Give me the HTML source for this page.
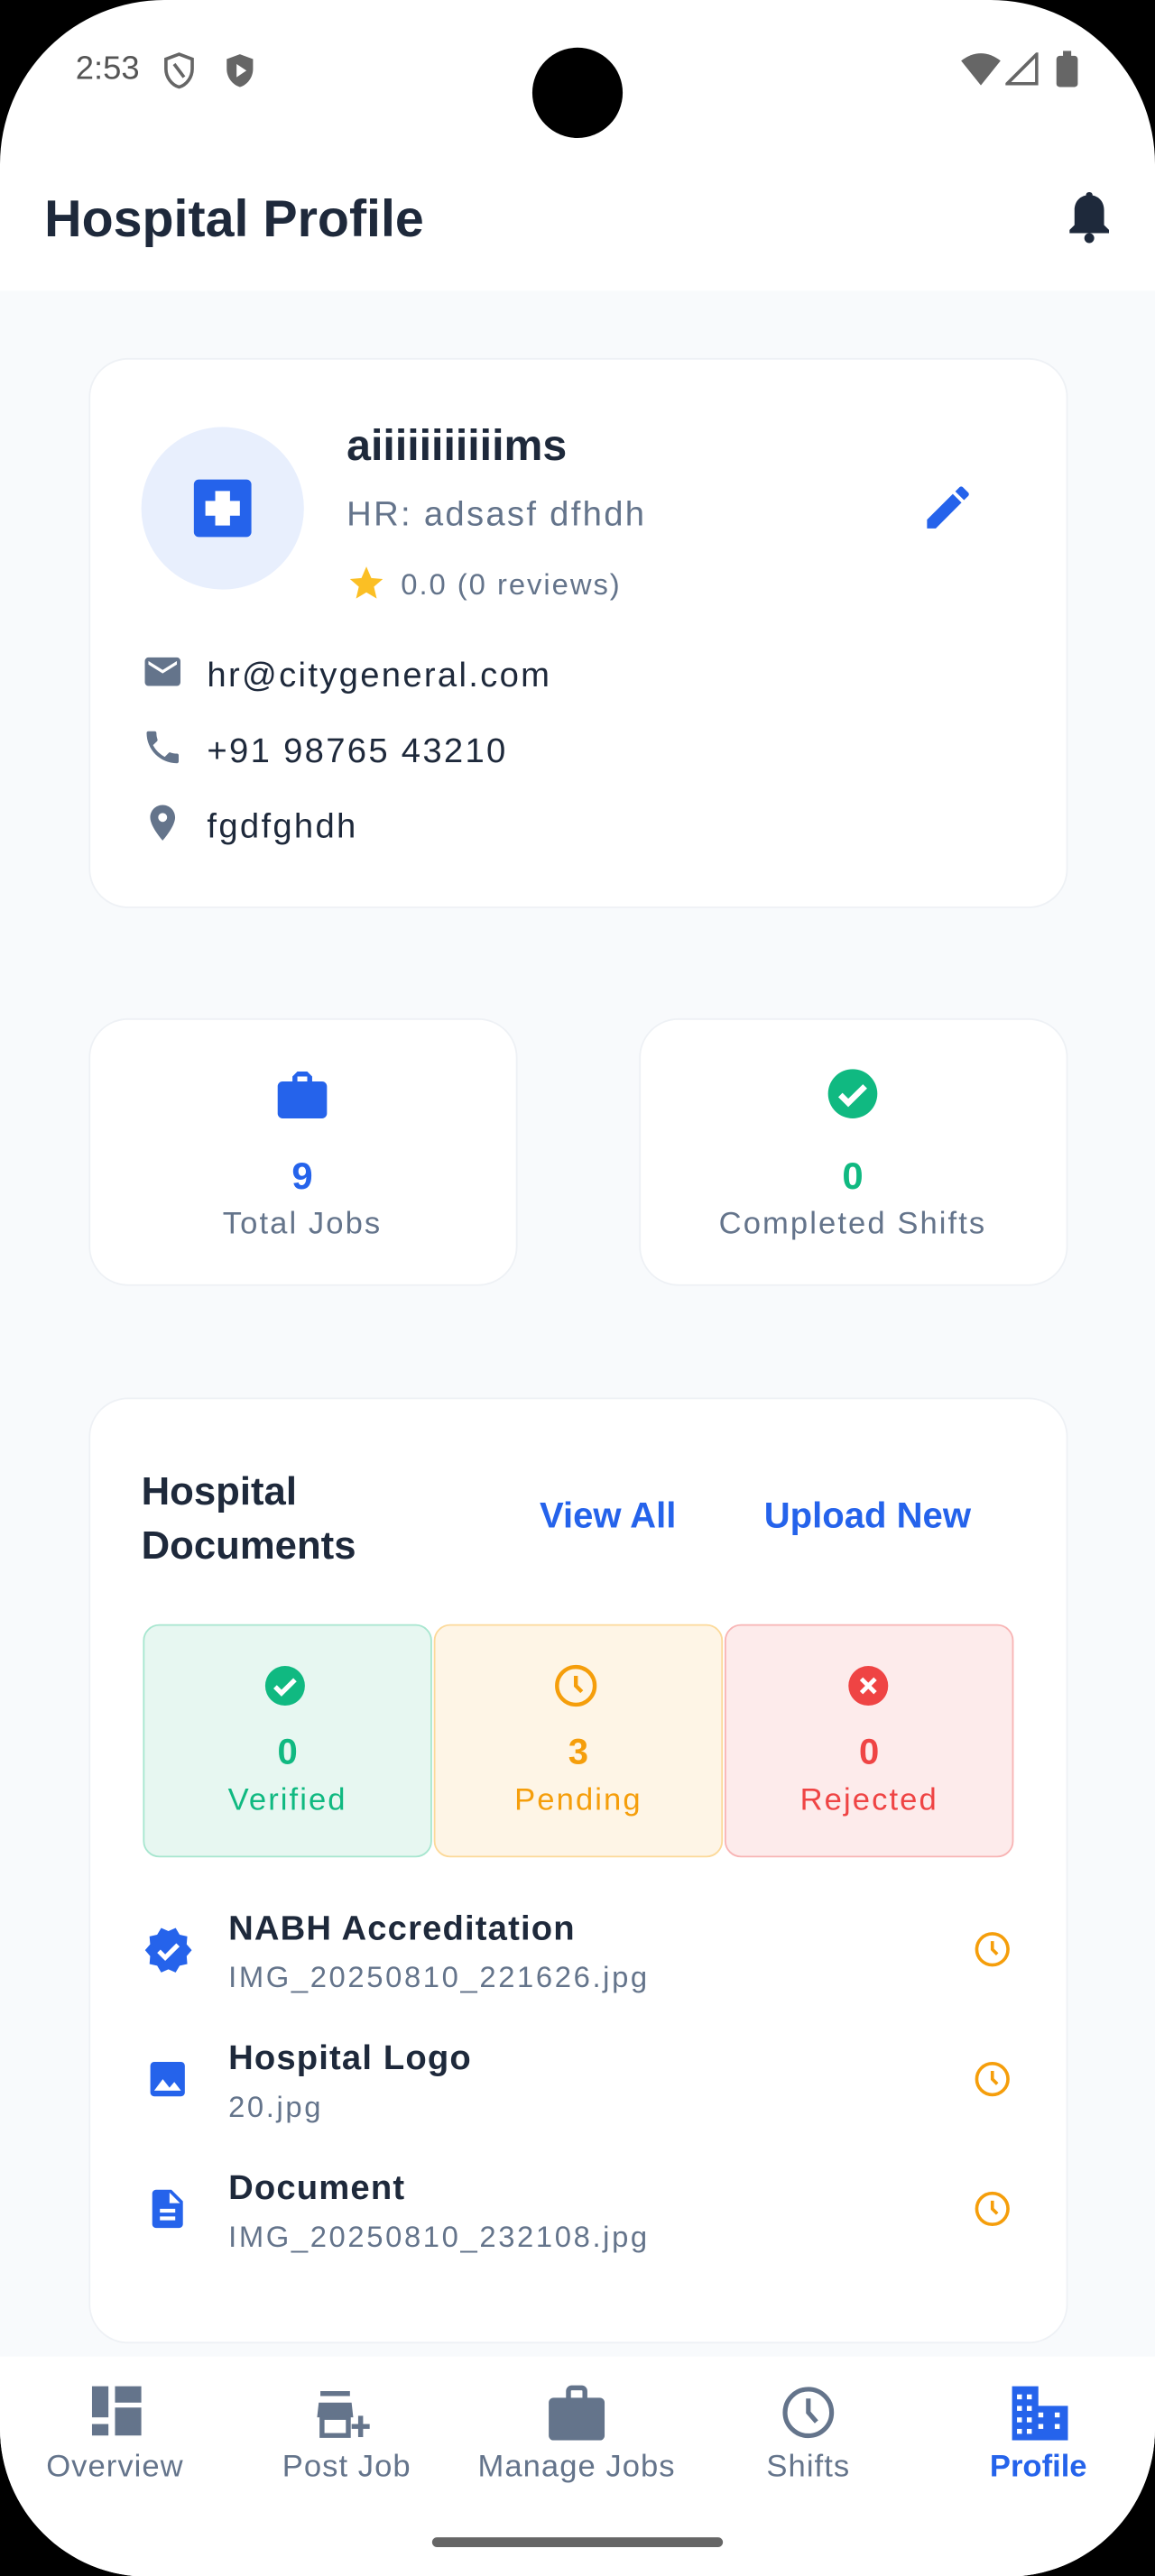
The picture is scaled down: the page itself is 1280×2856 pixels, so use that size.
<!DOCTYPE html>
<html><head><meta charset="utf-8"><style>
*{margin:0;padding:0;box-sizing:border-box}
html,body{width:1280px;height:2856px;overflow:hidden;background:#000}
#w{position:absolute;left:0;top:0;width:703px;height:1568.5px;transform:scale(1.82077);transform-origin:0 0;font-family:"Liberation Sans",Roboto,sans-serif}
#ph{position:absolute;inset:0;background:#fff;border-radius:100px 100px 90px 90px;overflow:hidden}
.a{position:absolute;white-space:nowrap}
.r{letter-spacing:0.06em}
.card{position:absolute;background:#fff;border:1px solid #eef1f5;border-radius:24px}
.c{transform:translateX(-50%);text-align:center}
svg{position:absolute}
</style></head><body><div id="w"><div id="ph">
<!-- status bar -->
<div class="a" style="left:46px;top:31px;font-size:20px;color:#555">2:53</div>
<svg style="left:97px;top:31px" width="24" height="24" viewBox="0 0 24 24"><path d="M12 2 4 5v6c0 5 3.4 9.7 8 11 4.6-1.3 8-6 8-11V5z" fill="none" stroke="#666" stroke-width="2"/><path d="M9 8l6 8" stroke="#666" stroke-width="2"/></svg>
<svg style="left:134px;top:31px" width="24" height="24" viewBox="0 0 24 24"><path d="M12 2 4 5v6c0 5 3.4 9.7 8 11 4.6-1.3 8-6 8-11V5z" fill="#666"/><path d="M10 8v8l6-4z" fill="#fff"/></svg>
<div class="a" style="left:324px;top:29px;width:55px;height:55px;border-radius:50%;background:#000"></div>
<svg style="left:584px;top:31px" width="26" height="22" viewBox="0 0 26 22"><path d="M1 6Q13-3 25 6L13 21z" fill="#666"/></svg>
<svg style="left:612px;top:32px" width="20" height="20" viewBox="0 0 20 20"><path d="M19 1V19H1z" fill="none" stroke="#666" stroke-width="2"/></svg>
<div class="a" style="left:643px;top:34px;width:13px;height:19px;background:#666;border-radius:2px"></div>
<div class="a" style="left:647px;top:31px;width:5px;height:4px;background:#666"></div>
<!-- app bar -->
<div class="a" style="left:27px;top:115px;font-size:31.5px;font-weight:bold;color:#1e293b">Hospital Profile</div>
<svg style="left:648px;top:115px" width="30" height="34" viewBox="0 0 30 34"><path d="M15 2c-1.5 0-2 1-2 2-5 1-7 5-7 9v9l-3 3v2h24v-2l-3-3v-9c0-4-2-8-7-9 0-1-.5-2-2-2z" fill="#1e293b"/><circle cx="15" cy="30" r="3" fill="#1e293b"/></svg>
<div class="a" style="left:0;top:177px;width:703px;height:1258px;background:#f8fafc"></div>
<!-- profile card -->
<div class="card" style="left:54px;top:218px;width:596px;height:335px"></div>
<div class="a" style="left:86px;top:260px;width:99px;height:99px;border-radius:50%;background:#e8effd"></div>
<svg style="left:117px;top:291px" width="37" height="37" viewBox="0 0 37 37"><rect x="1" y="1" width="35" height="35" rx="3" fill="#2563eb"/><path d="M14 8h9v6h6v9h-6v6h-9v-6H8v-9h6z" fill="#fff"/></svg>
<div class="a" style="left:211px;top:256px;font-size:26.5px;font-weight:bold;color:#1e293b">aiiiiiiiiiiims</div>
<div class="a r" style="left:211px;top:302px;font-size:21px;color:#64748b">HR: adsasf dfhdh</div>
<svg style="left:211px;top:343px" width="24" height="24" viewBox="0 0 24 24"><path d="M12 2l3 7 7 .6-5.4 4.7 1.7 7.2L12 17.7 5.7 21.5l1.7-7.2L2 9.6 9 9z" fill="#fbbf24"/></svg>
<div class="a r" style="left:244px;top:346px;font-size:18px;color:#64748b">0.0 (0 reviews)</div>
<svg style="left:560px;top:292px" width="34" height="34" viewBox="0 0 24 24"><path d="M3 17.25V21h3.75L17.81 9.94l-3.75-3.75zM20.71 7.04a1 1 0 000-1.41l-2.34-2.34a1 1 0 00-1.41 0l-1.83 1.83 3.75 3.75z" fill="#2563eb"/></svg>
<svg style="left:86px;top:396px" width="26" height="26" viewBox="0 0 24 24"><path d="M20 4H4a2 2 0 00-2 2v12a2 2 0 002 2h16a2 2 0 002-2V6a2 2 0 00-2-2zm0 4-8 5-8-5V6l8 5 8-5z" fill="#64748b"/></svg>
<svg style="left:86px;top:442px" width="26" height="26" viewBox="0 0 24 24"><path d="M6.6 10.8c1.4 2.8 3.8 5.1 6.6 6.6l2.2-2.2c.3-.3.7-.4 1-.2 1.1.4 2.3.6 3.6.6.6 0 1 .4 1 1V20c0 .6-.4 1-1 1C10.6 21 3 13.4 3 4c0-.6.4-1 1-1h3.5c.6 0 1 .4 1 1 0 1.3.2 2.5.6 3.6.1.3 0 .7-.2 1z" fill="#64748b"/></svg>
<svg style="left:86px;top:488px" width="26" height="26" viewBox="0 0 24 24"><path d="M12 2C8.1 2 5 5.1 5 9c0 5.2 7 13 7 13s7-7.8 7-13c0-3.9-3.1-7-7-7zm0 9.5a2.5 2.5 0 110-5 2.5 2.5 0 010 5z" fill="#64748b"/></svg>
<div class="a r" style="left:126px;top:400px;font-size:21px;color:#1e293b">hr@citygeneral.com</div>
<div class="a r" style="left:126px;top:446px;font-size:21px;color:#1e293b">+91 98765 43210</div>
<div class="a r" style="left:126px;top:492px;font-size:21px;color:#1e293b">fgdfghdh</div>
<!-- stats -->
<div class="card" style="left:54px;top:620px;width:261px;height:163px"></div>
<div class="card" style="left:389px;top:620px;width:261px;height:163px"></div>
<svg style="left:166px;top:648px" width="36" height="36" viewBox="0 0 24 24"><path d="M20 7h-4V5l-2-2h-4L8 5v2H4c-1.1 0-2 .9-2 2v11c0 1.1.9 2 2 2h16c1.1 0 2-.9 2-2V9c0-1.1-.9-2-2-2zm-6 0h-4V5h4z" fill="#2563eb"/></svg>
<svg style="left:501px;top:648px" width="36" height="36" viewBox="0 0 24 24"><circle cx="12" cy="12" r="10" fill="#10b981"/><path d="M7 12.5l3.2 3.2L17 9" stroke="#fff" stroke-width="2.4" fill="none"/></svg>
<div class="a c" style="left:184px;top:703px;font-size:23px;font-weight:bold;color:#2563eb">9</div>
<div class="a c r" style="left:184px;top:735px;font-size:19px;color:#64748b">Total Jobs</div>
<div class="a c" style="left:519px;top:703px;font-size:23px;font-weight:bold;color:#10b981">0</div>
<div class="a c r" style="left:519px;top:735px;font-size:19px;color:#64748b">Completed Shifts</div>
<!-- docs card -->
<div class="card" style="left:54px;top:851px;width:596px;height:576px"></div>
<div class="a" style="left:86px;top:892px;font-size:24px;font-weight:bold;color:#1e293b;line-height:33px">Hospital<br>Documents</div>
<div class="a c" style="left:370px;top:910px;font-size:22px;font-weight:bold;color:#2563eb">View All</div>
<div class="a c" style="left:528px;top:910px;font-size:22px;font-weight:bold;color:#2563eb">Upload New</div>
<div class="a" style="left:87px;top:989px;width:176px;height:142px;background:#e7f7f1;border:1px solid #a7e6cf;border-radius:10px"></div>
<div class="a" style="left:264px;top:989px;width:176px;height:142px;background:#fef5e6;border:1px solid #fcd999;border-radius:10px"></div>
<div class="a" style="left:441px;top:989px;width:176px;height:142px;background:#fdebeb;border:1px solid #f8b4b4;border-radius:10px"></div>
<svg style="left:159px;top:1012px" width="29" height="29" viewBox="0 0 24 24"><circle cx="12" cy="12" r="10" fill="#10b981"/><path d="M7 12.5l3.2 3.2L17 9" stroke="#fff" stroke-width="2.4" fill="none"/></svg>
<svg style="left:336px;top:1012px" width="29" height="29" viewBox="0 0 24 24"><circle cx="12" cy="12" r="9.5" fill="none" stroke="#f59e0b" stroke-width="2"/><path d="M12 7v5l3 3" stroke="#f59e0b" stroke-width="2" fill="none"/></svg>
<svg style="left:514px;top:1012px" width="29" height="29" viewBox="0 0 24 24"><circle cx="12" cy="12" r="10" fill="#ef4444"/><path d="M8.5 8.5l7 7M15.5 8.5l-7 7" stroke="#fff" stroke-width="2.2"/></svg>
<div class="a c" style="left:175px;top:1054px;font-size:22px;font-weight:bold;color:#10b981">0</div>
<div class="a c r" style="left:175px;top:1086px;font-size:19px;color:#10b981">Verified</div>
<div class="a c" style="left:352px;top:1054px;font-size:22px;font-weight:bold;color:#f59e0b">3</div>
<div class="a c r" style="left:352px;top:1086px;font-size:19px;color:#f59e0b">Pending</div>
<div class="a c" style="left:529px;top:1054px;font-size:22px;font-weight:bold;color:#ef4444">0</div>
<div class="a c r" style="left:529px;top:1086px;font-size:19px;color:#ef4444">Rejected</div>
<!-- doc rows -->
<svg style="left:87px;top:1172px" width="31" height="31" viewBox="0 0 24 24"><path d="M23 12l-2.4-2.8.3-3.7-3.6-.8-1.9-3.2L12 3 8.6 1.5 6.7 4.7l-3.6.8.3 3.7L1 12l2.4 2.8-.3 3.7 3.6.8 1.9 3.2L12 21l3.4 1.5 1.9-3.2 3.6-.8-.3-3.7z" fill="#2563eb"/><path d="M7.5 12.5l3 3 6-6" stroke="#fff" stroke-width="2.2" fill="none"/></svg>
<svg style="left:88px;top:1252px" width="28" height="28" viewBox="0 0 24 24"><rect x="3" y="3" width="18" height="18" rx="2" fill="#2563eb"/><path d="M5 18l4.5-6 3.5 4.5 2.5-3L19 18z" fill="#fff"/></svg>
<svg style="left:88px;top:1331px" width="28" height="28" viewBox="0 0 24 24"><path d="M14 2H6c-1.1 0-2 .9-2 2v16c0 1.1.9 2 2 2h12c1.1 0 2-.9 2-2V8zm2 16H8v-2h8zm0-4H8v-2h8zm-3-5V3.5L18.5 9z" fill="#2563eb"/></svg>
<div class="a" style="left:139px;top:1163px;font-size:21px;font-weight:bold;color:#1e293b;letter-spacing:0.03em">NABH Accreditation</div>
<div class="a r" style="left:139px;top:1194px;font-size:18px;color:#64748b;letter-spacing:0.08em">IMG_20250810_221626.jpg</div>
<div class="a" style="left:139px;top:1242px;font-size:21px;font-weight:bold;color:#1e293b;letter-spacing:0.03em">Hospital Logo</div>
<div class="a r" style="left:139px;top:1273px;font-size:18px;color:#64748b;letter-spacing:0.08em">20.jpg</div>
<div class="a" style="left:139px;top:1321px;font-size:21px;font-weight:bold;color:#1e293b;letter-spacing:0.03em">Document</div>
<div class="a r" style="left:139px;top:1352px;font-size:18px;color:#64748b;letter-spacing:0.08em">IMG_20250810_232108.jpg</div>
<svg style="left:592px;top:1175px" width="24" height="24" viewBox="0 0 24 24"><circle cx="12" cy="12" r="9.5" fill="none" stroke="#f59e0b" stroke-width="2"/><path d="M12 7v5l3 3" stroke="#f59e0b" stroke-width="2" fill="none"/></svg>
<svg style="left:592px;top:1254px" width="24" height="24" viewBox="0 0 24 24"><circle cx="12" cy="12" r="9.5" fill="none" stroke="#f59e0b" stroke-width="2"/><path d="M12 7v5l3 3" stroke="#f59e0b" stroke-width="2" fill="none"/></svg>
<svg style="left:592px;top:1333px" width="24" height="24" viewBox="0 0 24 24"><circle cx="12" cy="12" r="9.5" fill="none" stroke="#f59e0b" stroke-width="2"/><path d="M12 7v5l3 3" stroke="#f59e0b" stroke-width="2" fill="none"/></svg>
<!-- nav -->
<div class="a" style="left:0;top:1435px;width:703px;height:134px;background:#fff"></div>
<svg style="left:55px;top:1452px" width="32" height="32" viewBox="0 0 32 32"><path d="M1 1h10v19H1zM15 1h16v10H15zM1 24h10v7H1zM15 14h16v17H15z" fill="#64748b"/></svg>
<svg style="left:193px;top:1454px" width="38" height="34" viewBox="0 0 38 34"><path d="M2 2h18v3H2zM1 9h20l1 9H0z" fill="#64748b"/><path d="M3 18h16v11H3z" fill="none" stroke="#64748b" stroke-width="3"/><path d="M21 22h4v-5h3v5h4v3h-4v5h-3v-5h-4z" fill="#64748b"/></svg>
<svg style="left:333px;top:1452px" width="36" height="34" viewBox="0 0 36 34"><rect x="1" y="8" width="34" height="26" rx="3" fill="#64748b"/><rect x="13" y="2" width="10" height="9" rx="2" fill="none" stroke="#64748b" stroke-width="3"/></svg>
<svg style="left:475px;top:1452px" width="34" height="34" viewBox="0 0 24 24"><circle cx="12" cy="12" r="10" fill="none" stroke="#64748b" stroke-width="2"/><path d="M12 6v6l3.5 4" stroke="#64748b" stroke-width="2" fill="none"/></svg>
<svg style="left:615px;top:1452px" width="36" height="34" viewBox="0 0 36 34"><path d="M1 1h16v12h18v21H1z" fill="#2563eb"/><g fill="#fff"><rect x="4" y="6" width="3" height="3"/><rect x="10" y="6" width="3" height="3"/><rect x="4" y="13" width="3" height="3"/><rect x="10" y="13" width="3" height="3"/><rect x="4" y="20" width="3" height="3"/><rect x="10" y="20" width="3" height="3"/><rect x="4" y="27" width="3" height="3"/><rect x="10" y="27" width="3" height="3"/><rect x="17" y="17" width="3" height="3"/><rect x="17" y="24" width="3" height="3"/><rect x="27" y="17" width="3" height="3"/><rect x="27" y="24" width="3" height="3"/></g></svg>
<div class="a c" style="left:70px;top:1492px;font-size:19px;color:#64748b;letter-spacing:0.03em">Overview</div>
<div class="a c" style="left:211px;top:1492px;font-size:19px;color:#64748b;letter-spacing:0.03em">Post Job</div>
<div class="a c" style="left:351px;top:1492px;font-size:19px;color:#64748b;letter-spacing:0.03em">Manage Jobs</div>
<div class="a c" style="left:492px;top:1492px;font-size:19px;color:#64748b;letter-spacing:0.03em">Shifts</div>
<div class="a c" style="left:632px;top:1492px;font-size:19px;font-weight:bold;color:#2563eb">Profile</div>
<div class="a" style="left:263px;top:1545px;width:177px;height:6px;border-radius:3px;background:#666"></div>
</div></div></body></html>
